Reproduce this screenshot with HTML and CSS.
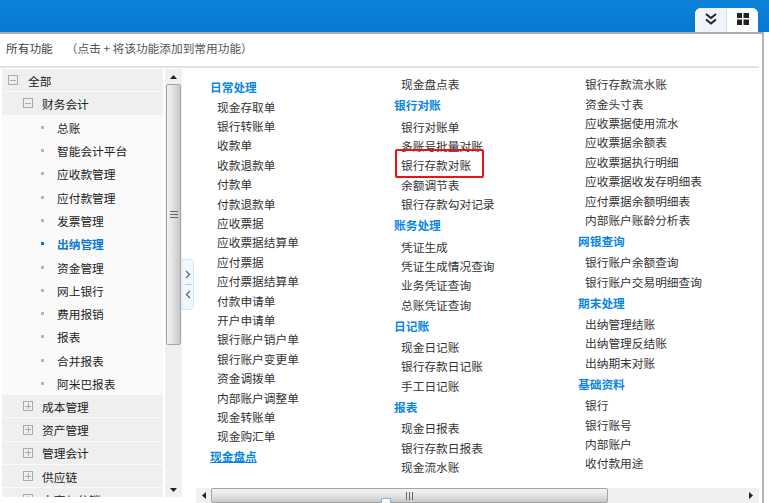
FILE: index.html
```html
<!DOCTYPE html>
<html lang="zh-CN">
<head>
<meta charset="utf-8">
<title>所有功能</title>
<link rel="stylesheet" href="styles.css">
</head>
<body>
<div class="app">
  <header class="topbar">
    <div class="tabs">
      <div class="tab tab-left">
        <svg width="16" height="14" viewBox="0 0 16 14"><path d="M3 2l5 4 5-4M3 7.500l5 4 5-4" fill="none" stroke="#222" stroke-width="2"/></svg>
      </div>
      <div class="tab tab-right">
        <svg width="12" height="12" viewBox="0 0 12 12"><path d="M0 0h5v5H0zM6.500 0H12v5H6.500zM0 6.500h5V12H0zM6.500 6.500H12V12H6.500z" fill="#222"/></svg>
      </div>
    </div>
  </header>
  <main class="panel">
    <div class="title"><span>所有功能</span><span class="hint">（点击 + 将该功能添加到常用功能）</span></div>
    <div class="body">
      <aside class="side">
        <ul class="tree">
          <li class="node l0"><i class="box minus"></i>全部</li>
          <li class="node l1"><i class="box minus"></i>财务会计</li>
          <li class="leaf"><i class="dot"></i>总账</li>
          <li class="leaf"><i class="dot"></i>智能会计平台</li>
          <li class="leaf"><i class="dot"></i>应收款管理</li>
          <li class="leaf"><i class="dot"></i>应付款管理</li>
          <li class="leaf"><i class="dot"></i>发票管理</li>
          <li class="leaf on"><i class="dot"></i>出纳管理</li>
          <li class="leaf"><i class="dot"></i>资金管理</li>
          <li class="leaf"><i class="dot"></i>网上银行</li>
          <li class="leaf"><i class="dot"></i>费用报销</li>
          <li class="leaf"><i class="dot"></i>报表</li>
          <li class="leaf"><i class="dot"></i>合并报表</li>
          <li class="leaf"><i class="dot"></i>阿米巴报表</li>
          <li class="node l1"><i class="box plus"></i>成本管理</li>
          <li class="node l1"><i class="box plus"></i>资产管理</li>
          <li class="node l1"><i class="box plus"></i>管理会计</li>
          <li class="node l1"><i class="box plus"></i>供应链</li>
          <li class="node l1"><i class="box plus"></i>电商与分销</li>
        </ul>
        <div class="vbar">
          <div class="vup"><svg width="7" height="4" viewBox="0 0 7 4"><path d="M3.500 0L7 4H0z" fill="#222"/></svg></div>
          <div class="vthumb"><svg width="8" height="8" viewBox="0 0 8 8"><path d="M0 .5h8M0 3.500h8M0 6.500h8" stroke="#666"/></svg></div>
          <div class="vdown"><svg width="7" height="4" viewBox="0 0 7 4"><path d="M0 0h7L3.500 4z" fill="#222"/></svg></div>
        </div>
      </aside>
      <div class="toggle-col">
        <div class="toggle">
          <svg width="6" height="9" viewBox="0 0 6 9"><path d="M1 1l3.500 3.500L1 8" fill="none" stroke="#667" stroke-width="1.400"/></svg>
          <span class="toggle-line"></span>
          <svg width="6" height="9" viewBox="0 0 6 9"><path d="M5 1L1.500 4.500 5 8" fill="none" stroke="#667" stroke-width="1.400"/></svg>
        </div>
      </div>
      <section class="content">
        <div class="cols">
          <div class="col col-1">
            <h3 class="head">日常处理</h3>
            <a class="item">现金存取单</a><a class="item">银行转账单</a><a class="item">收款单</a><a class="item">收款退款单</a><a class="item">付款单</a><a class="item">付款退款单</a><a class="item">应收票据</a><a class="item">应收票据结算单</a><a class="item">应付票据</a><a class="item">应付票据结算单</a><a class="item">付款申请单</a><a class="item">开户申请单</a><a class="item">银行账户销户单</a><a class="item">银行账户变更单</a><a class="item">资金调拨单</a><a class="item">内部账户调整单</a><a class="item">现金转账单</a><a class="item">现金购汇单</a>
            <h3 class="head under">现金盘点</h3>
          </div>
          <div class="col col-2">
            <a class="item">现金盘点表</a>
            <h3 class="head">银行对账</h3>
            <a class="item">银行对账单</a><a class="item">多账号批量对账</a><a class="item mark">银行存款对账</a><a class="item">余额调节表</a><a class="item">银行存款勾对记录</a>
            <h3 class="head">账务处理</h3>
            <a class="item">凭证生成</a><a class="item">凭证生成情况查询</a><a class="item">业务凭证查询</a><a class="item">总账凭证查询</a>
            <h3 class="head">日记账</h3>
            <a class="item">现金日记账</a><a class="item">银行存款日记账</a><a class="item">手工日记账</a>
            <h3 class="head">报表</h3>
            <a class="item">现金日报表</a><a class="item">银行存款日报表</a><a class="item">现金流水账</a>
          </div>
          <div class="col col-3">
            <a class="item">银行存款流水账</a><a class="item">资金头寸表</a><a class="item">应收票据使用流水</a><a class="item">应收票据余额表</a><a class="item">应收票据执行明细</a><a class="item">应收票据收发存明细表</a><a class="item">应付票据余额明细表</a><a class="item">内部账户账龄分析表</a>
            <h3 class="head">网银查询</h3>
            <a class="item">银行账户余额查询</a><a class="item">银行账户交易明细查询</a>
            <h3 class="head">期末处理</h3>
            <a class="item">出纳管理结账</a><a class="item">出纳管理反结账</a><a class="item">出纳期末对账</a>
            <h3 class="head">基础资料</h3>
            <a class="item">银行</a><a class="item">银行账号</a><a class="item">内部账户</a><a class="item">收付款用途</a>
          </div>
        </div>
        <div class="hbar">
          <div class="harrow"><svg width="4" height="7" viewBox="0 0 4 7"><path d="M4 0v7L0 3.500z" fill="#222"/></svg></div>
          <div class="hthumb"><svg width="8" height="8" viewBox="0 0 8 8"><path d="M.5 0v8M3.500 0v8M6.500 0v8" stroke="#666"/></svg></div>
          <div class="harrow harrow-r"><svg width="4" height="7" viewBox="0 0 4 7"><path d="M0 0v7l4-3.500z" fill="#222"/></svg></div>
        </div>
      </section>
    </div>
  </main>
</div>
</body>
</html>
```
FILE: styles.css
```css
* { box-sizing: border-box; }
html, body { margin: 0; height: 100%; background: #fff; overflow: hidden; }
body { font-family: "Noto Sans CJK SC", "Liberation Sans", sans-serif; font-size: 11.7px; color: #333; }
ul { list-style: none; margin: 0; padding: 0; }
h3 { margin: 0; }

.app { width: 769px; height: 503px; display: flex; flex-direction: column; }

.topbar { height: 32px; flex: none; display: flex; justify-content: flex-end; align-items: flex-end; padding-right: 11px; background: linear-gradient(#0a82d8, #0a78d0); }
.tabs { display: flex; width: 63px; height: 24px; background: #f6f9fc; border-radius: 6px 6px 0 0; overflow: hidden; }
.tab { display: flex; align-items: center; justify-content: center; padding-bottom: 3px; }
.tab-left { width: 32px; background: #eef4fa; border-right: 1px solid #d8dde2; }
.tab-right { flex: 1; background: #fdfeff; }

.panel { width: 764px; height: 471px; flex: none; display: flex; flex-direction: column; border-top: 2px solid #a9abad; border-right: 2px solid #b0b2b4; }
.title { height: 34px; flex: none; margin-right: 3px; display: flex; align-items: center; padding: 0 0 6px 6px; border-bottom: 2px solid #e2e2e2; color: #444; font-size: 11.7px; }
.hint { margin-left: 13px; color: #555; }

.body { flex: 1; min-height: 0; display: flex; padding-top: 1px; }

.side { width: 182px; flex: none; height: 428px; display: flex; padding-left: 2px; border-right: 2px solid #e9e9e9; }
.tree { width: 161px; flex: none; background: #f8f8f8; overflow: hidden; height: 428px; }
.node, .leaf { height: 23.300px; display: flex; align-items: center; font-size: 11.7px; color: #222; white-space: nowrap; }
.node { background: #efefef; border-bottom: 1px solid #fafafa; }
.l0 { padding-left: 6px; }
.l0 .box { margin-right: 10px; }
.l1 { padding-left: 21px; }
.l1 .box { margin-right: 9px; }
.leaf { padding-left: 39px; background: #fafafa; }
.on { color: #0a78d0; font-weight: 700; background: #fafafa; }
.box { width: 10px; height: 10px; border: 1px solid #aaa; background: linear-gradient(#aaa, #aaa) center / 6px 1px no-repeat; }
.plus { background: linear-gradient(#aaa, #aaa) center / 6px 1px no-repeat, linear-gradient(#aaa, #aaa) center / 1px 6px no-repeat; }
.dot { width: 3px; height: 3px; background: #b5b5b5; margin-right: 13px; }
.on .dot { background: #0a78d0; }

.vbar { width: 17px; margin-left: 2px; flex: none; height: 428px; background: #f0f0f0; display: flex; flex-direction: column; align-items: center; }
.vup { height: 15px; flex: none; display: flex; align-items: center; justify-content: center; }
.vthumb { width: 15px; height: 261px; flex: none; border: 1px solid #a5a5a5; border-radius: 2px; background: linear-gradient(90deg, #f2f2f2, #e2e2e2 45%, #c6c6c6); display: flex; align-items: center; justify-content: center; }
.vdown { flex: 1; display: flex; align-items: flex-end; justify-content: center; padding-bottom: 5px; }

.toggle-col { width: 13px; flex: none; display: flex; align-items: flex-start; padding-top: 190px; }
.toggle { width: 12px; height: 51px; background: #f1f8ff; border: 1px solid #cfe6fa; border-left: 1px solid #dceefc; border-radius: 0 5px 5px 0; display: flex; flex-direction: column; align-items: center; justify-content: center; gap: 5px; }
.toggle-line { width: 7px; height: 1px; background: #c8ccd0; }

.content { flex: 1; min-width: 0; display: flex; flex-direction: column; margin-right: 3px; }
.cols { flex: 1; min-height: 0; display: flex; overflow: hidden; padding: 5px 0 0 15px; }
.col { width: 184px; flex: none; display: flex; flex-direction: column; }
.col-1 { padding-top: 2px; }
.head { height: 23px; flex: none; display: flex; align-items: center; font-size: 11.700px; font-weight: 700; color: #0a86e0; white-space: nowrap; }
.col-1 .head { height: 20.500px; }
.under { text-decoration: underline; }
.item { height: 19.400px; flex: none; display: flex; align-items: center; padding-left: 7px; color: #333; white-space: nowrap; position: relative; }
.mark::after { content: ""; position: absolute; left: 1px; top: -6px; width: 85px; height: 25px; border: 2px solid #e8141a; border-radius: 2px; }

.hbar { height: 15px; flex: none; margin-left: 1px; background: #f0f0f0; display: flex; align-items: center; position: relative; }
.hbar::after { content: ""; position: absolute; left: 185px; bottom: 0; width: 8px; height: 4px; background: #fff; border: 1px solid #7fb2e0; border-bottom: 0; border-radius: 2px 2px 0 0; }
.harrow { width: 15px; flex: none; display: flex; align-items: center; justify-content: center; }
.harrow-r { margin-left: auto; margin-right: 1px; }
.hthumb { width: 397px; height: 15px; border: 1px solid #a5a5a5; border-radius: 2px; background: linear-gradient(#f4f4f4, #e4e4e4 50%, #c8c8c8); display: flex; align-items: center; justify-content: center; }
```
